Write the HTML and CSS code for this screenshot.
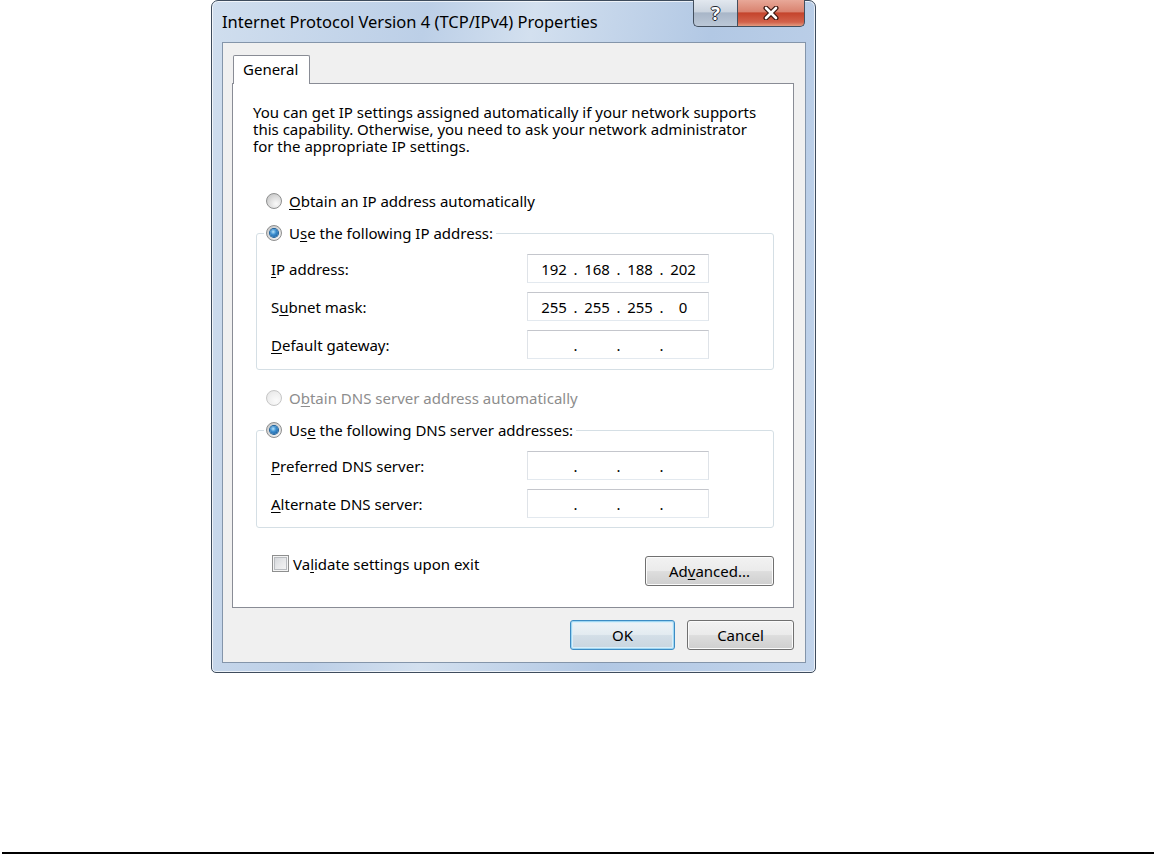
FILE: index.html
```html
<!DOCTYPE html>
<html lang="en">
<head>
  <meta charset="UTF-8">
  <title>Internet Protocol Version 4 (TCP/IPv4) Properties</title>
  <link rel="stylesheet" href="styles.css">
</head>
<body>
  <div class="page">
    <div class="window">
      <div class="titlebar">
        <span class="title">Internet Protocol Version 4 (TCP/IPv4) Properties</span>
        <div class="caption">
          <span class="cap help">?</span>
          <span class="cap close">
            <svg width="18" height="14" viewBox="0 0 18 14">
              <path d="M4 2 L14 12 M14 2 L4 12" stroke="#3b1610" stroke-width="5" stroke-linecap="round"/>
              <path d="M4 2 L14 12 M14 2 L4 12" stroke="#fff" stroke-width="2.6" stroke-linecap="round"/>
            </svg>
          </span>
        </div>
      </div>

      <div class="client">
        <div class="tabs"><span class="tab">General</span></div>

        <div class="panel">
          <p class="intro">You can get IP settings assigned automatically if your network supports<br>
          this capability. Otherwise, you need to ask your network administrator<br>
          for the appropriate IP settings.</p>

          <div class="opt first"><span class="radio"></span><span><u>O</u>btain an IP address automatically</span></div>

          <fieldset class="group">
            <legend><span class="opt"><span class="radio on"></span><span>U<u>s</u>e the following IP address:</span></span></legend>
            <div class="row">
              <span><u>I</u>P address:</span>
              <span class="ip"><span class="oct">192</span><span class="dot">.</span><span class="oct">168</span><span class="dot">.</span><span class="oct">188</span><span class="dot">.</span><span class="oct">202</span></span>
            </div>
            <div class="row">
              <span>S<u>u</u>bnet mask:</span>
              <span class="ip"><span class="oct">255</span><span class="dot">.</span><span class="oct">255</span><span class="dot">.</span><span class="oct">255</span><span class="dot">.</span><span class="oct">0</span></span>
            </div>
            <div class="row">
              <span><u>D</u>efault gateway:</span>
              <span class="ip"><span class="oct"></span><span class="dot">.</span><span class="oct"></span><span class="dot">.</span><span class="oct"></span><span class="dot">.</span><span class="oct"></span></span>
            </div>
          </fieldset>

          <div class="opt second disabled"><span class="radio"></span><span>O<u>b</u>tain DNS server address automatically</span></div>

          <fieldset class="group dns">
            <legend><span class="opt"><span class="radio on"></span><span>Us<u>e</u> the following DNS server addresses:</span></span></legend>
            <div class="row">
              <span><u>P</u>referred DNS server:</span>
              <span class="ip"><span class="oct"></span><span class="dot">.</span><span class="oct"></span><span class="dot">.</span><span class="oct"></span><span class="dot">.</span><span class="oct"></span></span>
            </div>
            <div class="row">
              <span><u>A</u>lternate DNS server:</span>
              <span class="ip"><span class="oct"></span><span class="dot">.</span><span class="oct"></span><span class="dot">.</span><span class="oct"></span><span class="dot">.</span><span class="oct"></span></span>
            </div>
          </fieldset>

          <div class="foot">
            <div class="check"><span class="box"></span><span>Va<u>l</u>idate settings upon exit</span></div>
            <button class="btn adv">Ad<u>v</u>anced...</button>
          </div>
        </div>

        <div class="actions">
          <button class="btn ok">OK</button>
          <button class="btn cancel">Cancel</button>
        </div>
      </div>
    </div>

    <div class="rule"></div>
  </div>
</body>
</html>
```

FILE: styles.css
```css
* { box-sizing: border-box; }
html, body { margin: 0; }
body { background: #fff; font-family: "Noto Sans", "Open Sans", sans-serif; font-size: 15px; color: #000; }
u { text-decoration-thickness: 1px; text-underline-offset: 2px; }

.page { height: 855px; display: flex; flex-direction: column; }

/* window frame */
.window {
  margin-left: 211px; width: 605px; height: 673px;
  border: 1px solid #3e4c5d; border-radius: 7px 7px 5px 5px;
  background: linear-gradient(100deg, #d0deee 0%, #bccfe7 30%, #d3e0ef 45%, #b2c8e4 70%, #c2d4eb 100%);
  box-shadow: inset 0 0 0 1px rgba(255,255,255,0.7);
  padding: 0 9px 9px 10px;
  display: flex; flex-direction: column;
}
.titlebar { height: 41px; display: flex; justify-content: space-between; align-items: flex-start; }
.title { font-size: 16.5px; line-height: 41px; color: #000; }
.caption { display: flex; margin-top: -1px; margin-right: 1px; }
.cap { height: 27px; display: flex; align-items: center; justify-content: center; border: 1px solid #434f5e; border-top: none; }
.help {
  width: 44px; border-right: none; border-radius: 0 0 0 5px;
  background: linear-gradient(#e2e8ef 0%, #cbd4df 45%, #a8b6c8 50%, #bcc8d7 100%);
  color: #fff; font-weight: bold; font-size: 18px;
  text-shadow: 1px 0 #1c2530, -1px 0 #1c2530, 0 1px #1c2530, 0 -1px #1c2530;
}
.close {
  width: 68px; border-radius: 0 0 5px 0;
  background: linear-gradient(#e8a898 0%, #d98370 45%, #c4442c 50%, #d2624b 85%, #e39a7f 100%);
}

/* client area */
.client {
  flex: 1; background: #f0f0f0; border: 1px solid #8495aa;
  display: flex; flex-direction: column;
}
.tabs { display: flex; margin: 12px 0 -1px 10px; }
.tab {
  position: relative; z-index: 1;
  width: 77px; height: 29px; padding-left: 9px; padding-bottom: 2px;
  display: flex; align-items: center;
  background: #fff; border: 1px solid #898c95; border-bottom: none; border-radius: 2px 2px 0 0;
}
.panel {
  margin: 0 11px 0 9px; background: #fff; border: 1px solid #898c95;
  padding: 20px 19px 21px 20px;
}
.intro { margin: 0; line-height: 17px; }

/* radio options */
.opt { display: flex; align-items: center; height: 20px; gap: 7px; }
.opt.first { margin: 36px 0 0 13px; }
.opt.second { margin: 18px 0 0 13px; }
.disabled { color: #8d8d8d; }
.radio {
  width: 16px; height: 16px; border-radius: 50%; flex: none; position: relative;
  border: 1px solid #8e8f8f;
  background: radial-gradient(circle at 65% 70%, #fafafa 0%, #e0e0e0 45%, #bdbdbd 100%);
}
.disabled .radio { border-color: #c6c6c6; background: radial-gradient(circle at 65% 70%, #fbfbfb 0%, #eeeeee 60%, #e0e0e0 100%); }
.radio.on::after {
  content: ""; position: absolute; left: 3px; top: 3px; width: 8px; height: 8px; border-radius: 50%;
  background: radial-gradient(circle at 40% 35%, #b6e3fa 0%, #3d8fd0 40%, #0e4f8e 100%);
  box-shadow: 0 0 0 1px #1a5f99;
}

/* group boxes */
.group {
  margin: 12px 0 0 3px; padding: 11px 14px 10px 14px; min-width: 0;
  border: 1px solid #d5dfe5; border-radius: 3px;
  display: flex; flex-direction: column; gap: 9px;
}
.group.dns { padding-bottom: 9px; }
.group legend { padding: 0 3px 0 2px; margin-left: -7px; }
.row { display: grid; grid-template-columns: 256px 182px; align-items: center; height: 29px; }

.ip {
  display: flex; height: 29px; padding-left: 9px; align-items: center;
  background: #fff; border: 1px solid; border-color: #c4c6cc #dfe3e8 #e3e9ef #dfe3e8;
}
.oct { width: 34px; text-align: center; }
.dot { width: 9px; text-align: center; }

/* bottom of panel */
.foot { display: flex; justify-content: space-between; align-items: flex-start; margin-top: 27px; }
.check { display: flex; align-items: center; gap: 4px; margin-left: 19px; height: 17px; }
.box {
  width: 17px; height: 17px; flex: none; border: 1px solid #8e8f8f;
  background: linear-gradient(135deg, #cfd2d6 0%, #e6e7e9 50%, #f7f7f7 100%);
  box-shadow: inset 0 0 0 1px #f4f4f4, inset 0 0 0 2px #b9bcc0;
}

.btn {
  font: inherit; color: #000; height: 30px; padding: 0;
  border: 1px solid #707070; border-radius: 3px;
  background: linear-gradient(#f2f2f2 0%, #ebebeb 48%, #dddddd 52%, #cfcfcf 100%);
  box-shadow: inset 0 0 0 1px #fbfbfb;
}
.adv { width: 129px; margin-top: 1px; }
.actions { display: flex; justify-content: flex-end; gap: 12px; margin: 12px 11px 0 0; }
.ok {
  width: 105px; border-color: #3c8cc4;
  background: linear-gradient(#eef3f7 0%, #e3ebf1 48%, #d3dee7 52%, #c8d5df 100%);
  box-shadow: inset 0 0 0 1px #9fd6f2, inset 0 0 0 2px #d9eef9;
}
.cancel { width: 107px; }

.rule { margin: auto 2px 1px 2px; height: 2px; background: #000; }
```
